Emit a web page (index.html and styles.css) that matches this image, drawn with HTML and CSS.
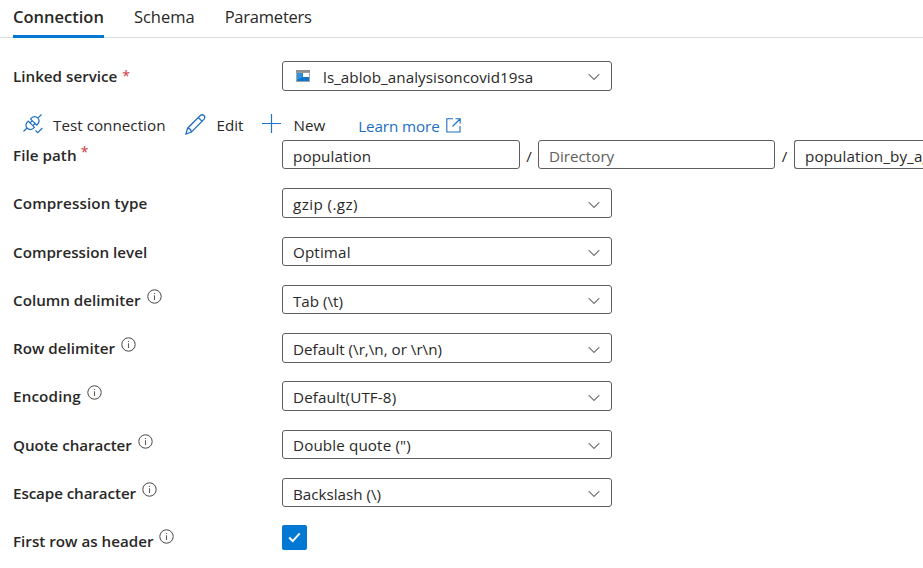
FILE: index.html
```html
<!DOCTYPE html>
<html lang="en">
<head>
<meta charset="utf-8">
<title>Dataset connection</title>
<link rel="stylesheet" href="styles.css">
</head>
<body>
<svg class="defs" width="0" height="0" aria-hidden="true">
  <symbol id="chevron" viewBox="0 0 12 8"><path d="M.7 1.200 6 6.500l5.300-5.300" fill="none" stroke="#707070" stroke-width="1.100"/></symbol>
  <symbol id="info" viewBox="0 0 15 15"><circle cx="7.500" cy="7.500" r="6.700" fill="none" stroke="#484644" stroke-width="1"/><path d="M7.500 6.200v4.800M7.500 3.900v1.200" stroke="#605e5c" stroke-width="1.100"/></symbol>
</svg>
<nav class="tabs">
  <a class="tab active"><span>Connection</span></a>
  <a class="tab"><span>Schema</span></a>
  <a class="tab params"><span>Parameters</span></a>
</nav>
<main>
  <div class="row linked">
    <label class="label"><span>Linked service</span> <b class="req">*</b></label>
    <div class="select">
      <svg class="blob" width="14" height="12" viewBox="0 0 14 12"><path d="M0 0h14v12H0z" fill="#a3a7aa"/><path d="M0 0h14v2.500H0z" fill="#909090"/><path d="M1 3h12v8H1z" fill="#0f75cc"/><path d="M1 3h5.500v4L1 10z" fill="#3291dc"/><path d="M7 3h6v4H7z" fill="#fff"/></svg>
      <span class="service">ls_ablob_analysisoncovid19sa</span><svg class="chev" width="12" height="8"><use href="#chevron"/></svg>
    </div>
  </div>
  <div class="actions">
    <svg class="plug" width="20" height="20" viewBox="0 0 20 20" fill="none" stroke="#1f6fc9" stroke-width="1.200"><path d="M.5 17.500 4 14M14.800 4.200 18.500.5M4 14C2 11.800 2.500 9.800 5.200 7.100l6.300 6.300C8.800 16.100 6.300 16.200 4 14ZM7.500 4.900l6.300 6.300c2.700-2.700 3.200-4.800 1-7C12.600 2 10.200 2.200 7.500 4.900ZM7 8.900l2.200-2.200M9.800 11.700 12 9.500M12.500 16.500l2.200 2.200 4.700-4.700"/></svg>
    <span class="test">Test connection</span>
    <svg class="pencil" width="21" height="21" viewBox="0 0 21 21" fill="none" stroke="#1f6fc9" stroke-width="1.300"><path d="m1 20 1.600-5.800L15.300 1.500c2.700-2 5.700 1 3.800 3.700L6.500 18 1 20ZM2.600 14.200c2 .3 3.500 1.700 3.900 3.800M13.300 3.500l3.900 3.900"/></svg>
    <span class="edit">Edit</span>
    <svg class="plus" width="19" height="19" viewBox="0 0 19 19"><path d="M9.500 0v19M0 9.500h19" stroke="#1f73cb" stroke-width="1.200"/></svg>
    <span class="new">New</span>
    <a class="learn"><span>Learn more</span><svg width="15" height="15" viewBox="0 0 15 15" fill="none" stroke="#1b6ec2" stroke-width="1.100"><path d="M7 .8H.8v13.200H14V8M9.500.8h4.700v4.700M14 1 6.500 8.500"/></svg></a>
  </div>
  <div class="row file">
    <label class="label"><span>File path</span> <b class="req">*</b></label>
    <div class="path">
      <div class="input"><span class="pop">population</span></div><i>/</i>
      <div class="input dir"><span>Directory</span></div><i class="second">/</i>
      <div class="input last"><span>population_by_ag</span></div>
    </div>
  </div>
  <div class="fields">
    <div class="row tall"><label class="label"><span class="wide">Compression type</span></label><div class="select"><span class="gzip">gzip (.gz)</span><svg class="chev" width="12" height="8"><use href="#chevron"/></svg></div></div>
    <div class="row"><label class="label"><span>Compression level</span></label><div class="select"><span class="wide">Optimal</span><svg class="chev" width="12" height="8"><use href="#chevron"/></svg></div></div>
    <div class="row low"><label class="label"><span>Column delimiter</span><svg class="info" width="15" height="15"><use href="#info"/></svg></label><div class="select"><span>Tab (\t)</span><svg class="chev" width="12" height="8"><use href="#chevron"/></svg></div></div>
    <div class="row tall"><label class="label"><span>Row delimiter</span><svg class="info" width="15" height="15"><use href="#info"/></svg></label><div class="select"><span>Default (\r,\n, or \r\n)</span><svg class="chev" width="12" height="8"><use href="#chevron"/></svg></div></div>
    <div class="row tall"><label class="label"><span class="encoding">Encoding</span><svg class="info" width="15" height="15"><use href="#info"/></svg></label><div class="select"><span class="wide">Default(UTF-8)</span><svg class="chev" width="12" height="8"><use href="#chevron"/></svg></div></div>
    <div class="row"><label class="label"><span class="quote">Quote character</span><svg class="info" width="15" height="15"><use href="#info"/></svg></label><div class="select"><span class="wide">Double quote (")</span><svg class="chev" width="12" height="8"><use href="#chevron"/></svg></div></div>
    <div class="row low"><label class="label"><span class="escape">Escape character</span><svg class="info" width="15" height="15"><use href="#info"/></svg></label><div class="select"><span>Backslash (\)</span><svg class="chev" width="12" height="8"><use href="#chevron"/></svg></div></div>
    <div class="row header"><label class="label"><span>First row as header</span><svg class="info" width="15" height="15"><use href="#info"/></svg></label><div class="check"><svg width="13" height="11" viewBox="0 0 13 11"><path d="m1.200 5.500 3.500 3.600 7-7.700" fill="none" stroke="#fff" stroke-width="2"/></svg></div></div>
  </div>
</main>
</body>
</html>
```
FILE: styles.css
```css
* { box-sizing: border-box; }
body { margin: 0; width: 923px; height: 568px; overflow: hidden; background: #fff; color: #292827; font: 15.2px/20px "Open Sans", sans-serif; }
.defs { position: absolute; }
span { white-space: nowrap; }
.tabs { display: flex; height: 38px; padding-left: 13px; gap: 30px; border-bottom: 1px solid #dcdcdc; font-size: 16.5px; line-height: 34px; }
.tab { height: 38px; }
.active { border-bottom: 3px solid #0078d4; font-weight: 600; }
.params { letter-spacing: -.22px; }
.row { display: flex; height: 29px; }
.tall { height: 30px; }
.label { display: flex; flex: 0 0 269px; padding-top: 5px; margin-left: 13px; font-weight: 600; }
.req { color: #d13438; margin-left: 5px; font-weight: 400; font-size: 14px; }
.select { display: flex; align-items: center; width: 330px; height: 100%; padding: 1px 11px 0 10px; border: 1px solid #605e5c; border-radius: 3px; }
.tall .select, .low .select { padding-top: 2px; }
.wide { letter-spacing: .13px; }
.gzip { letter-spacing: .42px; }
.chev { margin: 1px 0 0 auto; }
.linked { height: 30px; margin-top: 23px; }
.service { letter-spacing: .05px; }
.blob { margin: -2px 13px 0 3px; }
.actions { display: flex; height: 49px; padding: 23px 0 0 23px; align-items: flex-start; }
.test { margin: 1px 20px 0 10px; letter-spacing: .03px; }
.edit { margin: 1px 19px 0 10px; }
.new { margin: 1px 33px 0 12px; }
.learn { display: flex; gap: 6px; color: #1b6ec2; margin-top: 2px; letter-spacing: -.08px; }
.learn svg { margin-top: 2px; }
.file .label { letter-spacing: .05px; }
.file .req { margin: -3px 0 0 4px; }
.path { display: flex; width: 641px; overflow: hidden; }
.input { flex: none; width: 238px; height: 29px; padding: 5px 10px; border: 1px solid #605e5c; border-radius: 3px; }
.pop { letter-spacing: .12px; }
.path i { width: 18px; text-align: center; font-style: normal; padding-top: 6px; }
.path .second { width: 19px; }
.dir { color: #605e5c; width: 237px; }
.last { width: 129px; padding-right: 0; overflow: hidden; border-right: 0; border-radius: 3px 0 0 3px; letter-spacing: .12px; }
.fields { display: grid; grid-template-rows: 49px 48px 48px 48px 49px 48px 47px 30px; margin-top: 19px; }
.encoding { letter-spacing: .15px; }
.quote { letter-spacing: -.07px; }
.escape { letter-spacing: -.1px; }
.header .label { padding-top: 6px; }
.info { margin: -1px 0 0 6px; }
.header .info { margin: -2px 0 0 5px; }
.check { width: 25px; height: 25px; display: grid; place-items: center; background: #0078d4; border-radius: 2px; }
```
